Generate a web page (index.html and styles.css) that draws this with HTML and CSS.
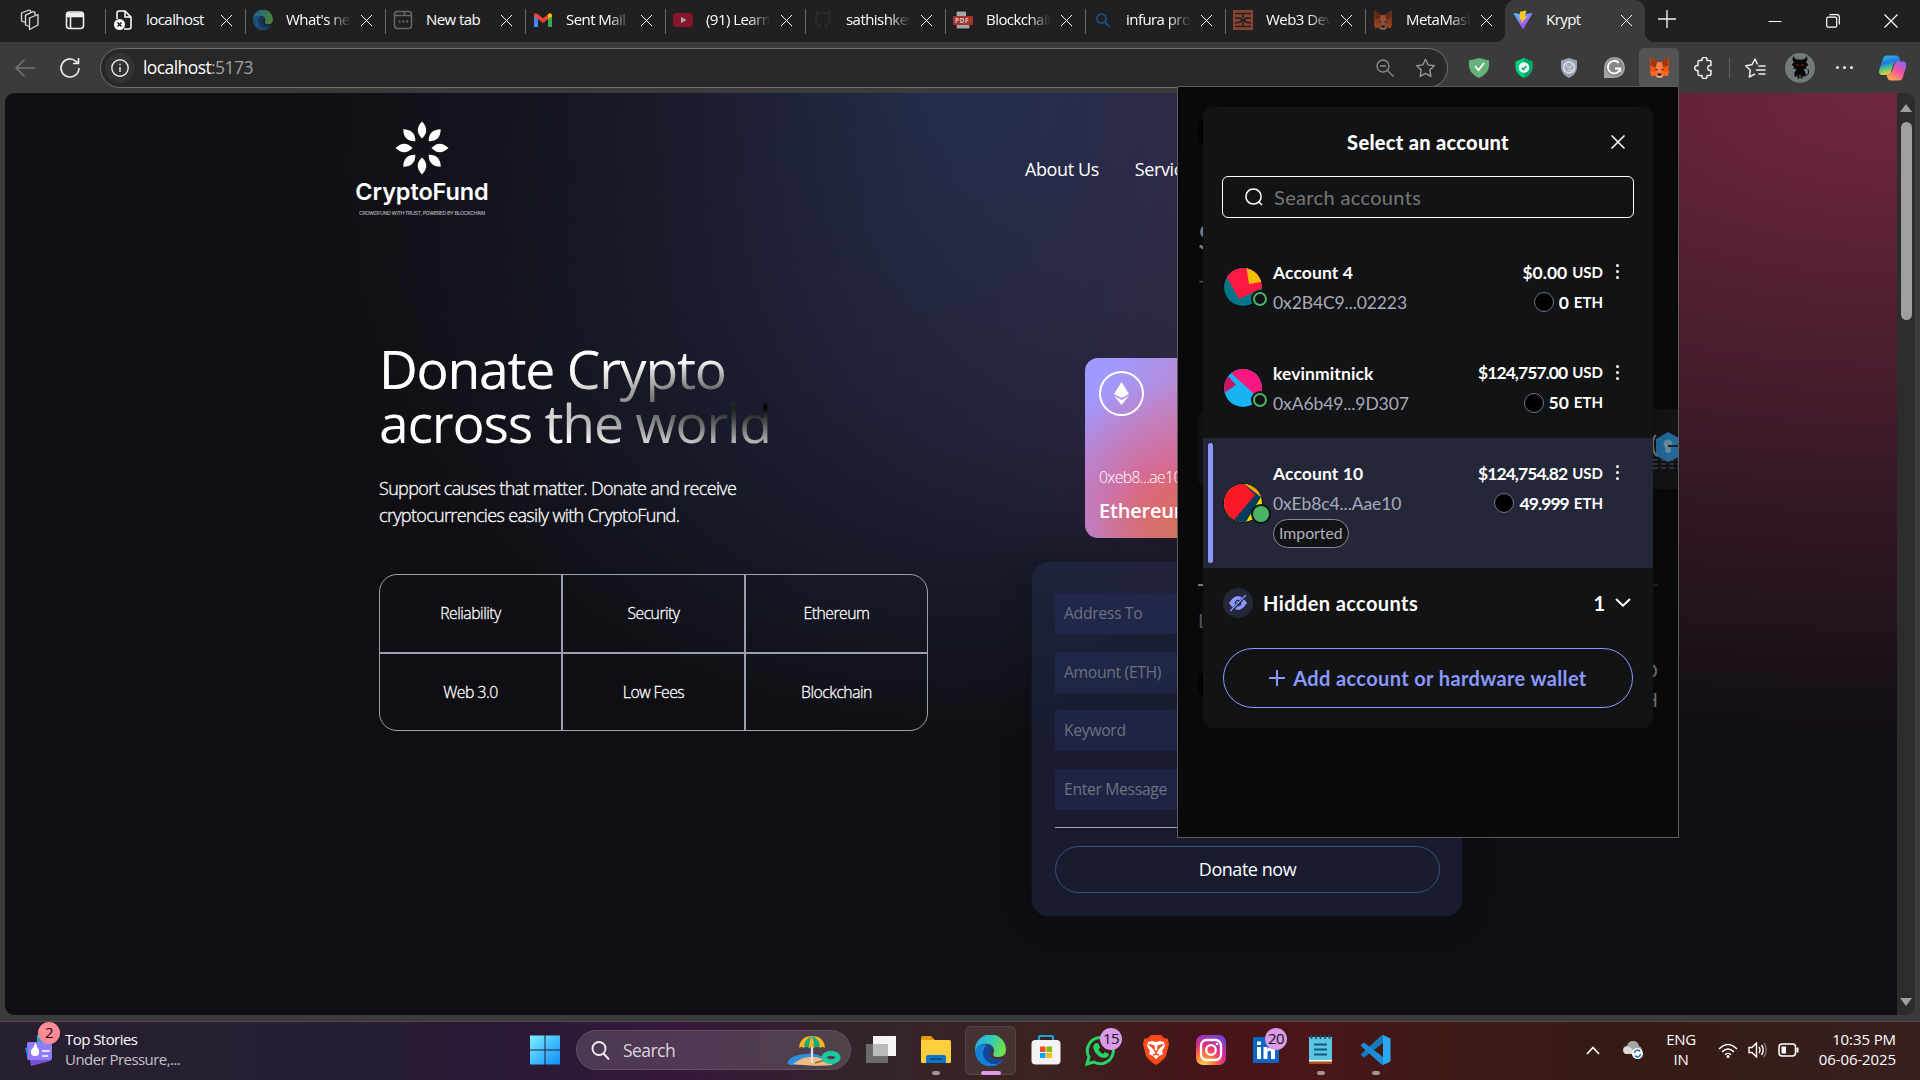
FILE: index.html
```html
<!DOCTYPE html>
<html lang="en">
<head>
<meta charset="utf-8">
<title>Krypt</title>
<link rel="stylesheet" href="styles.css">
</head>
<body>
<header class="tabstrip">
  <div class="strip-tools">
    <svg width="22" height="22" viewBox="0 0 22 22" fill="none" stroke="#ddd" stroke-width="1.3" stroke-linejoin="round"><path d="M10.500 9l8.500-3.500v10.500l-8.500 4.500z"/><path d="M10.500 17.500L6.500 16V6.200L14.500 2.500l1.500 1v2.500M6.500 13.500L2.500 12V4l7.500-3 1.500.8v1.500"/></svg>
    <svg width="20" height="20" viewBox="0 0 20 20" fill="none" stroke="#eee" stroke-width="1.6"><rect x="1.500" y="2" width="17" height="16.500" rx="3"/><path d="M2 3.500h16v3H2zM5.500 7v11" fill="#eee"/></svg>
  </div>
  <nav class="tabs">
    <div class="tab"><svg class="fav" viewBox="0 0 20 20"><path d="M4 9V3q0-2 2-2h6l6 6v10q0 2-2 2h-5M12 1v6h6" fill="none" stroke="#fff" stroke-width="1.500"/><circle cx="6.500" cy="14.500" r="5.500" fill="#fff"/><path d="M4.500 12.500l4 4m0-4l-4 4" stroke="#222" stroke-width="1.600"/></svg><span class="title">localhost</span><i class="x"></i></div>
    <div class="tab"><svg class="fav dim" viewBox="0 0 24 24"><use href="#edge"/></svg><span class="title">What's new</span><i class="x"></i></div>
    <div class="tab"><svg class="fav" viewBox="0 0 20 20" fill="none" stroke="#686868" stroke-width="1.500"><rect x="1.500" y="1.500" width="17" height="17" rx="3"/><path d="M2 5.500h8q1.500 0 1.500-1.500V2M11.500 5.500h7"/><path d="M5.500 11.500h2m1.800 0h2m1.800 0h2" stroke-width="2"/></svg><span class="title">New tab</span><i class="x"></i></div>
    <div class="tab"><svg class="fav" viewBox="0 0 20 20"><path d="M1 5v12h4V9z" fill="#4285f4"/><path d="M19 5v12h-4V9z" fill="#34a853"/><path d="M1 4.500Q1.500 2.500 4 3.500l6 4.700 6-4.700v5L10 13 4.500 8.800 1 6.500z" fill="#ea4335"/><path d="M15 9V4.300q3-2.500 4 .7v1.500z" fill="#fbbc04"/></svg><span class="title">Sent Mail</span><i class="x"></i></div>
    <div class="tab"><svg class="fav" viewBox="0 0 20 20"><rect y="3" width="20" height="14" rx="3.500" fill="#87152b"/><path d="M8 7l5.500 3L8 13z" fill="#aaa"/></svg><span class="title">(91) Learn</span><i class="x"></i></div>
    <div class="tab"><svg class="fav" viewBox="0 0 20 20"><path d="M7 18v-3q-4 0-4-3M7 15q-4-1-4-6 0-2 1-3V2l3 1h6l3-1v4q1 1 1 3 0 5-4 6v3" fill="none" stroke="#272c31" stroke-width="2"/></svg><span class="title">sathishkev</span><i class="x"></i></div>
    <div class="tab"><svg class="fav" viewBox="0 0 20 20"><path d="M3 1h10l4 5v13H3z" fill="#a7a4a4" stroke="#111"/><path d="M13 1v5h4z" fill="#222"/><rect y="6" width="20" height="9" rx="1" fill="#a6332e"/><text x="2" y="13" class="pdf">PDF</text></svg><span class="title">Blockchain</span><i class="x"></i></div>
    <div class="tab"><svg class="fav" viewBox="0 0 20 20" fill="none" stroke="#1b4b78" stroke-width="2"><circle cx="8.500" cy="8.500" r="4.500"/><path d="M12 12l4.500 5"/></svg><span class="title">infura proj</span><i class="x"></i></div>
    <div class="tab"><svg class="fav" viewBox="0 0 20 20"><path d="M0 0h20v20H0z" fill="#864332"/><path d="M2 3.500h16M2 16.500h16M10 3v5M10 17v-5M2 8h5l3 2.500L13 8h5M2 13l5-1 3-2 3 2 5 1" fill="none" stroke="#25201e" stroke-width="1.700"/></svg><span class="title">Web3 Dev</span><i class="x"></i></div>
    <div class="tab"><svg class="fav dim" viewBox="0 0 24 24"><use href="#fox"/></svg><span class="title">MetaMask</span><i class="x"></i></div>
    <div class="tab active"><svg class="fav" viewBox="0 0 20 20"><defs><linearGradient id="vt" x1="0" x2=".6" y2="1"><stop stop-color="#41d1ff"/><stop offset="1" stop-color="#bd34fe"/></linearGradient></defs><path d="M.3 3l9.700 16.500L19.700 3 10 4.500z" fill="url(#vt)"/><path d="M13.500.5L7 1.800 6.500 10l2.500-.5L8 14l6.500-8-3 .5z" fill="#ffc922"/></svg><span class="title">Krypt</span><i class="x"></i></div>
  </nav>
  <svg class="plus" width="18" height="18" viewBox="0 0 18 18" stroke="#eee" stroke-width="1.400"><path d="M9 0v18M0 9h18"/></svg>
  <div class="winctl">
    <svg width="14" height="14" viewBox="0 0 14 14" stroke="#fff"><path d="M.5 7.500h13"/></svg>
    <svg width="14" height="14" viewBox="0 0 14 14" fill="none" stroke="#fff" stroke-width="1.200"><rect x=".7" y="3.200" width="10" height="10" rx="1.500"/><path d="M3.500.7h7.300q2.500 0 2.500 2.500v7.300"/></svg>
    <svg width="14" height="14" viewBox="0 0 14 14" stroke="#fff" stroke-width="1.200"><path d="M.5.5l13 13m0-13l-13 13"/></svg>
  </div>
</header>

<div class="toolbar">
  <svg class="back" width="20" height="18" viewBox="0 0 20 18" fill="none" stroke="#777" stroke-width="1.500"><path d="M20 9H1M9.500.8L1 9l8.500 8.200"/></svg>
  <svg class="reload" width="22" height="22" viewBox="0 0 22 22" fill="none" stroke="#eee" stroke-width="1.600"><path d="M20 11a9 9 0 1 1-3-6.700l2 2M19.500 1v5.500H14"/></svg>
  <div class="address">
    <span class="site"><svg width="18" height="18" viewBox="0 0 18 18" fill="none" stroke="#eee" stroke-width="1.400"><circle cx="9" cy="9" r="8.200"/><path d="M9 8v5M9 4.800v1.500"/></svg></span>
    <span class="url">localhost<em>:5173</em></span>
    <svg class="zoomout" width="18" height="18" viewBox="0 0 18 18" fill="none" stroke="#8a8a8a" stroke-width="1.400"><circle cx="7" cy="7" r="6"/><path d="M11.500 11.500l6 6M4 7h6"/></svg>
    <svg width="21" height="20" viewBox="0 0 24 24" fill="none" stroke="#999" stroke-width="1.600" stroke-linejoin="round"><path d="M12 1.500l3.200 6.800 7.300 1-5.300 5.200 1.300 7.500L12 18.400 5.500 22l1.300-7.500L1.500 9.300l7.300-1z"/></svg>
  </div>
  <div class="exts">
    <span class="ext"><svg width="20" height="20" viewBox="0 0 20 20"><path d="M10 0l10 2.500v6Q19 16 10 20 1 16 0 8.500v-6z" fill="#67b279"/><path d="M6 8l3.500 4L15 5" fill="none" stroke="#fff" stroke-width="1.800"/></svg></span>
    <span class="ext"><svg width="20" height="20" viewBox="0 0 20 20"><path d="M10 0l8.500 3.500V10q-1 7-8.500 10-7.500-3-8.500-10V3.500z" fill="#00d17d"/><path d="M10 0l8.500 3.500V10q-1 7-8.500 10z" fill="#00a863"/><circle cx="10" cy="9.500" r="5.300" fill="#e9fff6"/><path d="M8 9.500l1.500 2 3-3.500" fill="none" stroke="#189c6d" stroke-width="1.500"/></svg></span>
    <span class="ext"><svg width="20" height="20" viewBox="0 0 20 20"><path d="M10 0l8 2.500V10q-1 7-8 10-7-3-8-10V2.500z" fill="#98a2b8"/><circle cx="10" cy="9.500" r="5.500" fill="#a9adb9" stroke="#dce0ea" stroke-width="1.500"/><path d="M7 7l3 3 4-4M9 12h4" stroke="#d5d9e3" fill="none"/></svg></span>
    <span class="ext"><svg width="21" height="21" viewBox="0 0 20 20"><path d="M0 20V10A10 10 0 1 1 10 20z" fill="#a5a5a5"/><circle cx="10" cy="10" r="8.500" fill="#888"/><path d="M14 5.500A6 6 0 1 0 15.500 11H10.500M15.500 11v3" fill="none" stroke="#fff" stroke-width="1.800"/></svg></span>
    <span class="ext on"><svg width="21" height="21" viewBox="0 0 24 24"><g id="fox"><path d="M2 .5L9.500 6h5L22 .5l1 8.500-1.500 5 1.300 3.500-1.500 4.500-4.300-1-2.500 2.500h-5L7 21l-4.300 1-1.500-4.500L2.500 14 1 9z" fill="#ff6a24"/><path d="M2 .5L9.500 6 8 12l-6.500-2zM22 .5L14.500 6l1.500 6 6.500-2z" fill="#a8350f"/><path d="M9.500 6h5l2 8-4.500 6-4.500-6z" fill="#ff8142"/><path d="M1.500 10.500L8 12l-1 5-5.500.5zm21 0L16 12l1 5 5.500.5z" fill="#f2560f"/><path d="M7.500 13l3.300 1.800-3.300.6zm9 0l-3.300 1.800 3.300.6z" fill="#241a3a"/><path d="M9.800 19.300l.8-.8h2.800l.8.800-.4 2h-3.600z" fill="#2d1b3d"/><path d="M7.500 20.500l2.300 1.200h4.400l2.300-1.200-2 3h-5z" fill="#e0c3b2"/></g></svg></span>
    <span class="ext"><svg width="21" height="22" viewBox="0 0 21 22" fill="none" stroke="#eee" stroke-width="1.500" stroke-linejoin="round"><path d="M4 5q0-1.500 1.500-1.500H8a2.600 2.600 0 1 1 5 0h2.500Q17 3.500 17 5v3.500a2.600 2.600 0 1 0 0 5V17q0 1.500-1.500 1.500H13a2.600 2.600 0 1 1-5 0H5.500Q4 18.500 4 17v-3.500a2.600 2.600 0 1 1 0-5z"/></svg></span>
  </div>
  <i class="vsep"></i>
  <svg class="favs" width="21" height="20" viewBox="0 0 21 20" fill="none" stroke="#eee" stroke-width="1.500" stroke-linejoin="round"><path d="M12.500 6.500L10 1 7 6.700l-6.300 1 4.600 4.600-1 6.700L10 15.800M13.500 8h7M11 12h9.500M13.500 16h7"/></svg>
  <svg class="avatar" width="30" height="30" viewBox="0 0 30 30"><circle cx="15" cy="15" r="15" fill="#71797b"/><path d="M9 3q0 3 3 3.500h6q3-.5 3-3.500 3 3 0 6l2.500 3-2.500 1.500.5 2-3 1 2 3v4h-2.500l-.5-2v4h-2v-4h-1v4h-2v-4l-1 2h-2v-4l2-3-3-1 .5-2L6.500 12 9 9q-3-3 0-6z" fill="#080808"/><path d="M20 22q5 1 3-6" stroke="#111" fill="none"/><path d="M11.500 11.500l2 1m5-1l-2 1" stroke="#d21"/></svg>
  <span class="more"><i></i><i></i><i></i></span>
  <svg class="copilot" width="28" height="26" viewBox="0 0 28 26"><defs><linearGradient id="c1" x2=".3" y2="1"><stop stop-color="#2fc8ee"/><stop offset=".45" stop-color="#2377df"/><stop offset=".65" stop-color="#3bbf9a"/><stop offset="1" stop-color="#f2d324"/></linearGradient><linearGradient id="c2" x1=".8" x2=".2" y2="1"><stop stop-color="#9c5cf0"/><stop offset=".5" stop-color="#f2569c"/><stop offset="1" stop-color="#ffb04a"/></linearGradient></defs><path d="M8 .5h9q3 0 4 4l.5 2.500h-4q-2.500 0-3.500 3l-2 7q-.7 3-3.500 3H3Q-1 20 .5 14L4 3.500Q5 .5 8 .5z" fill="url(#c1)"/><path d="M20 25.500h-8q-3 0-4-4l-.5-2.500h2q2.500 0 3.500-3l2.500-7q1-2.500 3.500-2.500h5q4 0 3 5.500L24 22q-1 3.500-4 3.500z" fill="url(#c2)"/></svg>
</div>

<div class="frame">
  <main class="page">
    <div class="nav">
      <div class="logo">
        <svg width="54" height="54" viewBox="-27 -27 54 54" fill="#fff"><g id="pp"><path id="pt" d="M0-26.500Q8.500-17.500 0-9.500-8.500-17.500 0-26.500z"/><use href="#pt" transform="rotate(90)"/></g><use href="#pp" transform="rotate(180)"/><use href="#pp" transform="rotate(45)"/><use href="#pp" transform="rotate(225)"/></svg>
        <b>CryptoFund</b>
        <small>CROWDFUND WITH TRUST, POWERED BY BLOCKCHAIN</small>
      </div>
      <div class="links"><a>About Us</a><a>Services</a></div>
    </div>
    <div class="hero">
      <section class="intro">
        <h1>Donate Crypto<br>across the world</h1>
        <p>Support causes that matter. Donate and receive<br>cryptocurrencies easily with CryptoFund.</p>
        <div class="features">
          <div>Reliability</div><div>Security</div><div>Ethereum</div>
          <div>Web 3.0</div><div>Low Fees</div><div>Blockchain</div>
        </div>
      </section>
      <section class="give">
        <div class="ethcard">
          <span class="ethring"><svg width="15" height="23" viewBox="0 0 15 23" fill="#fff"><path d="M7.500 0L15 12l-7.500 4L0 12zM0 13.700l7.500 4.200 7.500-4.200L7.500 23z"/></svg></span>
          <div><span class="addr">0xeb8...ae10</span><b>Ethereum</b></div>
        </div>
        <form class="form">
          <div class="field">Address To</div><div class="field">Amount (ETH)</div><div class="field">Keyword</div><div class="field">Enter Message</div>
          <hr>
          <div class="donate">Donate now</div>
        </form>
      </section>
    </div>
  </main>
  <aside class="scroll"><i class="up"></i><span class="thumb"></span><i class="down"></i></aside>
</div>

<div class="popup">
  <div class="behind">
    <i class="dot d1"></i><span class="ghost g1">S</span><span class="ghost g2">-</span>
    <i class="strip"></i>
    <svg class="hex" width="25" height="44" viewBox="0 0 25 44"><path d="M15 3l13 7v17l-13 6-12-6V10z" fill="#246e9f"/><path d="M3 6q-3 2-3 10t4 11" stroke="#777" fill="none" stroke-width="2"/><circle cx="15" cy="15" r="4.500" fill="#6d91a8"/><circle cx="15" cy="21" r="3" fill="#6d91a8"/><path d="M15 17h10" stroke="#16262f" stroke-width="2"/><path d="M0 31h25M0 35h25M0 39h25" stroke="#56526c" stroke-dasharray="5 3"/></svg>
    <i class="rule"></i><span class="ghost g3">L</span><i class="dot d2"></i><span class="ghost g4">D</span><span class="ghost g5">H</span>
  </div>
  <div class="modal">
    <div class="mhead"><h2>Select an account</h2><svg width="14" height="14" viewBox="0 0 14 14" stroke="#fff" stroke-width="1.500"><path d="M.5.5l13 13m0-13l-13 13"/></svg></div>
    <div class="search"><svg width="18" height="18" viewBox="0 0 18 18" fill="none" stroke="#fff" stroke-width="1.500"><circle cx="8.500" cy="8.500" r="7.600"/><path d="M14 14l3 3"/></svg><span>Search accounts</span></div>
    <div class="acct">
      <span class="pic"><svg width="40" height="40" viewBox="-20 -20 40 40"><circle r="19.500" fill="#000"/><clipPath id="cc"><circle r="19"/></clipPath><g clip-path="url(#cc)"><path d="M-20-20h40v40h-40z" fill="#007688"/><path d="M-22-20h50V-3L-4 12z" fill="#fc1943"/><path d="M3-22l3 19 18-3v-16z" fill="#f3be00"/></g></svg><i></i></span>
      <div class="who"><b>Account 4</b><span>0x2B4C9...02223</span></div>
      <div class="bal"><span>$0.00 <small>USD</small></span><span><i></i>0 <small>ETH</small></span></div>
      <span class="kebab"><i></i><i></i><i></i></span>
    </div>
    <div class="acct">
      <span class="pic"><svg width="40" height="40" viewBox="-20 -20 40 40"><circle r="19.500" fill="#000"/><g clip-path="url(#cc)"><path d="M-20-20h40v40h-40z" fill="#18b3f2"/><path d="M-12-20h34V16L11 6-12-15z" fill="#fc1780"/><path d="M-22-8l8-3 7 8-15 10z" fill="#c81466"/></g></svg><i></i></span>
      <div class="who"><b>kevinmitnick</b><span>0xA6b49...9D307</span></div>
      <div class="bal"><span class="tight">$124,757.00 <small>USD</small></span><span><i></i>50 <small>ETH</small></span></div>
      <span class="kebab"><i></i><i></i><i></i></span>
    </div>
    <div class="acct sel">
      <span class="pic"><svg width="40" height="40" viewBox="-20 -20 40 40"><circle r="19.500" fill="#000"/><g clip-path="url(#cc)"><path d="M-20-20h40v40h-40z" fill="#f5dc00"/><path d="M-4-22h26V-4L15-8z" fill="#faa600"/><path d="M-10-20H0L18-6 1 22h-14z" fill="#053c5e"/><path d="M-22-22h20L12-8-9 17-22 20z" fill="#fb1827"/></g></svg><i></i></span>
      <div class="who"><b>Account 10</b><span>0xEb8c4...Aae10</span><em>Imported</em></div>
      <div class="bal"><span class="tight">$124,754.82 <small>USD</small></span><span class="tight"><i></i>49.999 <small>ETH</small></span></div>
      <span class="kebab"><i></i><i></i><i></i></span>
    </div>
    <div class="hidden">
      <span class="eye"><svg width="18" height="18" viewBox="0 0 18 18"><path d="M0 9q9-14 18 0-9 14-18 0z" fill="#8b99ff"/><circle cx="9" cy="9" r="2.700" fill="none" stroke="#242738" stroke-width="1.200"/><path d="M1.500 17.500l15.500-16" stroke="#242738" stroke-width="3"/><path d="M1.200 17L17 1" stroke="#8b99ff" stroke-width="1.200"/></svg></span>
      <span class="hl">Hidden accounts</span><span>1</span>
      <svg width="16" height="9" viewBox="0 0 16 9" fill="none" stroke="#fff" stroke-width="2"><path d="M1 1l7 6.700L15 1"/></svg>
    </div>
    <div class="add"><svg width="16" height="16" viewBox="0 0 16 16" stroke="#8b99ff" stroke-width="2"><path d="M8 0v16M0 8h16"/></svg><span>Add account or hardware wallet</span></div>
  </div>
</div>

<footer class="taskbar">
  <div class="widgets">
    <div class="news"><svg width="28" height="32" viewBox="0 0 28 32"><path d="M12 0h12v10H12z" fill="#17a5c9"/><path d="M2 8h22q2 0 2 2l1 13q0 2-2 3L6 31z" fill="#7b4fd6"/><rect x="2" y="7" width="25" height="18" rx="2" fill="#8d7dfa"/><path d="M0 13l3-1v12z" fill="#2f8dd8"/><path d="M10 8q-1 5-4 7-1 6 4 6t4-5q0-2-2-4 0-3-2-4z" fill="#fff"/><path d="M17 16h8M17 21h6" stroke="#e8dcff" stroke-width="2"/></svg><i class="badge pink">2</i></div>
    <div class="headline"><span>Top Stories</span><span>Under Pressure,...</span></div>
  </div>
  <div class="apps">
    <svg width="30" height="30" viewBox="0 0 30 30"><defs><linearGradient id="wn" x2="1" y2="1"><stop stop-color="#7cf0ff"/><stop offset="1" stop-color="#0b8dfb"/></linearGradient></defs><path d="M0 .5h14.500v14H0zM15.500.5H30v14H15.500zM0 15.500h14.500v14H0zM15.500 15.500H30v14H15.500z" fill="url(#wn)"/></svg>
    <div class="tsearch"><svg width="19" height="19" viewBox="0 0 19 19" fill="none" stroke="#eee" stroke-width="1.900"><circle cx="8" cy="7.500" r="6.500"/><path d="M12.500 12.500l5.500 6"/></svg><span>Search</span>
      <svg class="beach" width="56" height="32" viewBox="0 0 56 32"><path d="M0 29Q3 21 18 20q16-3 26 11H3z" fill="#2c8fe0"/><path d="M6 30q19-15 40 1-16 2-40-1z" fill="#f2bd7c"/><path d="M25 2v27" stroke="#e7ddf0" stroke-width="2.200"/><path d="M12 14Q13 2 25 2t13 12q-3-2-5 0-3-3-6 0-2-2-5 0-3-3-5 0-3-2-5 0z" fill="#f6b51e"/><path d="M17 14q0-9 8-12-3 5-3 12-3-3-5 0zM27 14q0-7-2-12 8 3 8 12-3-3-6 0z" fill="#11a883"/><path d="M28 29l10-3" stroke="#96613c" stroke-width="1.500"/><ellipse cx="44" cy="23.500" rx="7" ry="4.200" fill="none" stroke="#20c7a3" stroke-width="5"/></svg></div>
    <div class="app"><svg width="30" height="30" viewBox="0 0 30 30"><path d="M0 9h22v19H0z" fill="#777" opacity=".85"/><path d="M7 1h23v20H7z" fill="#f4f4f4"/><path d="M7 9h15v12H7z" fill="#bbb"/></svg></div>
    <div class="app run"><svg width="30" height="28" viewBox="0 0 30 28"><path d="M0 2q0-2 2-2h8l4 4h14v8H0z" fill="#e09c0b"/><rect y="4" width="30" height="23" rx="1.500" fill="#ffce3e"/><path d="M5 27v-6q0-2 2-2h16q2 0 2 2v6z" fill="#1272c8"/><path d="M9 23h12" stroke="#08477f" stroke-width="1.500"/></svg></div>
    <div class="app current"><svg width="31" height="31" viewBox="0 0 24 24"><defs><linearGradient id="eg" x2="1" y2=".2"><stop stop-color="#2ca7e6"/><stop offset=".5" stop-color="#2fc4c5"/><stop offset="1" stop-color="#6de24c"/></linearGradient></defs><g id="edge"><path d="M0 12A12 12 0 0 1 24 11q0 6-6 6-3.500 0-4-2 2-5-2-7.500Q4 5 0 12z" fill="url(#eg)"/><path d="M0 12Q3 6.500 9 7.200 4 14 10 19q5 4 12 0A12 12 0 0 1 0 12z" fill="#1580d8"/><path d="M9 7.500Q12 7 13.500 10 9 15 14 18q4 2 8 .5Q17 25 10 21 3 15 9 7.500z" fill="#11489a"/></g></svg></div>
    <div class="app"><svg width="30" height="30" viewBox="0 0 30 30"><path d="M8 8V2.500Q8 1 9.500 1h11Q22 1 22 2.500V8" fill="none" stroke="#1aa2e2" stroke-width="2.200"/><rect x=".5" y="5" width="29" height="24.500" rx="4" fill="#f3f3f3"/><path d="M9 11.500h5.500v5.500H9z" fill="#f25022"/><path d="M15.500 11.500H21v5.500h-5.500z" fill="#7fba00"/><path d="M9 18h5.500v5H9z" fill="#00a4ef"/><path d="M15.500 18H21v5h-5.500z" fill="#ffb900"/></svg></div>
    <div class="app"><svg width="31" height="31" viewBox="0 0 31 31"><path d="M2 29l2-7A13 13 0 1 1 9 27z" fill="none" stroke="#25d366" stroke-width="3"/><path d="M11 8q-4 2-2 7 3 7 10 8 4 0 5-4l-4-2-2 2q-3-1-4.500-4.500L15 12.500 13.500 8.500z" fill="#25d366"/></svg><i class="badge">15</i></div>
    <div class="app"><svg width="26" height="30" viewBox="0 0 26 30"><path d="M8 0h10l3 3 4 1 1 5-3 12q-2 4-10 9Q5 25 3 21L0 9l1-5 4-1z" fill="#fb4a1c"/><path d="M5 7l4-1 4 1 4-1 4 1 1 4-3 5 1 3-4 2-3 3-3-3-4-2 1-3-3-5z" fill="#fff"/><path d="M7 10l4 1v3zM19 10l-4 1v3zM11 14l2 4 2-4M10 20l3-1 3 1" stroke="#fb4a1c" fill="none" stroke-width="1.400"/></svg></div>
    <div class="app"><svg width="30" height="30" viewBox="0 0 30 30"><defs><radialGradient id="ig" cx=".25" cy="1" r="1.150"><stop stop-color="#ffd45a"/><stop offset=".3" stop-color="#fd7a36"/><stop offset=".6" stop-color="#e02a86"/><stop offset="1" stop-color="#6a45dd"/></radialGradient></defs><rect width="30" height="30" rx="7" fill="url(#ig)"/><g fill="none" stroke="#fff" stroke-width="2.300"><rect x="5" y="5" width="20" height="20" rx="5.500"/><circle cx="15" cy="15" r="4.800"/></g><circle cx="21" cy="9" r="1.300" fill="#fff"/></svg></div>
    <div class="app"><svg width="26" height="26" viewBox="0 0 26 26"><rect width="26" height="26" rx="1" fill="#0a66c2"/><path d="M4 10h4v12H4zM4 4.500h4V8H4zM10.500 10h3.800v2q4-4.500 7.700 0v10h-4v-7q-1-3-3.500 0v7h-4z" fill="#fff"/></svg><i class="badge">20</i></div>
    <div class="app run"><svg width="23" height="30" viewBox="0 0 23 30"><path d="M0 26h23v3H0z" fill="#a2551b"/><path d="M0 2h23v24H0z" fill="#5ac7e2"/><path d="M0 25h23v1.500H0z" fill="#fff"/><path d="M2.500 0v4m4.500-4v4m4.500-4v4M16 0v4m4.500-4v4" stroke="#17516d" stroke-width="1.700"/><path d="M5 9.500h13M5 14.500h13M5 19.500h13" stroke="#14577a" stroke-width="2"/></svg></div>
    <div class="app run"><svg width="30" height="30" viewBox="0 0 30 30"><path d="M22 0l7.500 3.500v23L22 30z" fill="#2aa9f3"/><path d="M22 8L3 22.500l-3-2.500v-1L20.500.5 22 0z" fill="#1479bd"/><path d="M22 22L3 7.500 0 10v1l20.500 18.500L22 30z" fill="#1b8ed6"/></svg></div>
  </div>
  <div class="tray">
    <svg width="14" height="9" viewBox="0 0 14 9" fill="none" stroke="#fff" stroke-width="1.700"><path d="M1 8l6-6.500L13 8"/></svg>
    <svg class="cloud" width="20" height="18" viewBox="0 0 20 18"><path d="M4 13q-4 0-4-4t4-4q1-5 6-5t6 5q3 1 3 5l-2 3z" fill="#a9a5a5"/><path d="M3 13q-4-2-2-6 4-4 8 1l3 5z" fill="#ddd"/><circle cx="14.500" cy="12.500" r="5.500" fill="#fff"/><path d="M11.500 12a3 3 0 0 1 5.500-1.500M17.500 13a3 3 0 0 1-5.500 1.500" fill="none" stroke="#1b6fc2" stroke-width="1.500"/></svg>
    <div class="lang"><span>ENG</span><span>IN</span></div>
    <svg width="20" height="15" viewBox="0 0 20 15" fill="none" stroke="#fff" stroke-width="1.500"><path d="M1 6q9-9 18 0M4 9q6-6 12 0M7 11.700q3-2.800 6 0"/><circle cx="10" cy="13.500" r=".8" fill="#fff"/></svg>
    <svg width="19" height="16" viewBox="0 0 19 16" fill="none" stroke="#fff" stroke-width="1.400"><path d="M1 5.500h3L8.500 1v14L4 10.500H1zM11 5q2 3 0 6M13.500 3q3.500 5 0 10"/><path d="M16 1q4.500 7 0 14" stroke="#876e6e"/></svg>
    <svg width="21" height="14" viewBox="0 0 21 14" fill="none" stroke="#fff" stroke-width="1.500"><rect x="1" y="1" width="16.500" height="12" rx="3"/><path d="M19.500 4.500v5" stroke-width="2"/><rect x="3.500" y="3.500" width="4.500" height="7" fill="#fff" stroke="none"/></svg>
    <div class="clock"><span>10:35 PM</span><span>06-06-2025</span></div>
  </div>
</footer>
</body>
</html>
```

FILE: styles.css
```css
* { box-sizing: border-box; }
body {
  margin: 0; width: 1920px; height: 1080px; overflow: hidden; position: relative;
  display: flex; flex-direction: column; background: #3b3b3b; color: #fff;
  font-family: "Open Sans", "Noto Sans", sans-serif;
}
svg { display: block; flex: none; }
i, em { font-style: normal; }

/* tab strip */
.tabstrip { height: 42px; flex: none; display: flex; background: #202020; }
.strip-tools { width: 105px; display: flex; align-items: center; padding: 0 0 2px 19px; gap: 24px; }
.tabs { display: flex; }
.tab { width: 140px; height: 42px; display: flex; align-items: center; padding: 0 0 2px 8px; position: relative; }
.tab::before { content: ""; width: 1px; height: 25px; background: #6b6b6b; position: absolute; left: 0; top: 9px; }
.fav { width: 20px; height: 20px; }
.dim { opacity: .5; }
.pdf { font: 700 6.500px "Open Sans", sans-serif; fill: #ccc; letter-spacing: .6px; }
.title {
  width: 65px; margin-left: 13px; overflow: hidden; white-space: nowrap; font-size: 15px; line-height: 20px; padding-bottom: 2px; letter-spacing: -.55px;
  -webkit-mask-image: linear-gradient(90deg, #000 65%, transparent 100%);
}
.active .title, .tab:first-child .title, .tab:nth-child(3) .title { -webkit-mask-image: none; }
.x { width: 11px; height: 11px; margin-left: 10px; background: linear-gradient(45deg, transparent 46%, #fff 46% 54%, transparent 54%), linear-gradient(-45deg, transparent 46%, #fff 46% 54%, transparent 54%); }
.active { background: #3b3b3b; border-radius: 10px 10px 0 0; }
.active::before { display: none; }
.active::after {
  content: ""; position: absolute; left: -10px; right: -10px; bottom: 0; height: 10px;
  background: radial-gradient(circle at 0 0, transparent 10px, #3b3b3b 10.5px) left / 10px 10px no-repeat,
              radial-gradient(circle at 100% 0, transparent 10px, #3b3b3b 10.5px) right / 10px 10px no-repeat;
}
.plus { margin: 10px 0 0 13px; }
.winctl { margin-left: auto; display: flex; align-items: center; gap: 44px; padding-right: 22px; }

/* toolbar */
.toolbar { height: 51px; flex: none; display: flex; align-items: center; padding-left: 15px; }
.reload { margin-left: 24px; }
.address {
  margin-left: 19px; width: 1348px; height: 40px; border: 1px solid #6e6e6e; border-radius: 20px; background: #282828;
  display: flex; align-items: center; padding: 0 11px 0 4px;
}
.site { width: 30px; height: 30px; border-radius: 50%; background: #333; display: grid; place-items: center; }
.url { font-size: 17.5px; letter-spacing: -.58px; margin-left: 8px; padding-bottom: 2px; flex: 1; }
.url em { color: #a0a0a0; }
.zoomout { margin-right: 21px; }
.exts { display: flex; margin-left: 11px; height: 40px; gap: 5px; }
.ext { width: 40px; display: grid; place-items: center; border-radius: 5px; }
.on { background: #545454; }
.vsep { width: 1px; height: 20px; background: #616161; margin-left: 5px; }
.favs { margin-left: 15px; }
.avatar { margin-left: 19px; }
.more { display: flex; gap: 4px; margin-left: 21px; }
.more i { width: 3px; height: 3px; border-radius: 50%; background: #eee; }
.copilot { margin-left: 26px; }

/* page */
.frame { height: 928px; flex: none; display: flex; padding: 0 5px 6px; }
.page {
  width: 1892px; height: 922px; border-radius: 9px 0 0 9px; overflow: hidden; background-color: #0f0e13;
  background-image: radial-gradient(at 0% 0%, hsl(253,16%,7%) 0, transparent 50%),
    radial-gradient(at 50% 0%, hsl(225,39%,28%) 0, transparent 50%),
    radial-gradient(at 100% 0%, hsl(339,49%,30%) 0, transparent 50%);
}
.nav { height: 153px; display: flex; align-items: flex-start; }
.logo { width: 134px; margin: 28px 0 0 350px; display: flex; flex-direction: column; align-items: center; }
.logo b { font: 600 23.500px/29px Inter, sans-serif; letter-spacing: -.1px; margin-top: 2px; }
.logo small { font: 500 5.2px/8px Inter, sans-serif; color: #b5b5ba; white-space: nowrap; margin-top: 3px; letter-spacing: -.35px; }
.links { margin: 63px 0 0 536px; display: flex; gap: 36px; font-size: 18px; line-height: 26px; letter-spacing: -.4px; }
.hero { display: flex; }
.intro { width: 549px; margin: 91px 0 0 374px; display: flex; flex-direction: column; align-items: flex-start; }
h1 {
  margin: 0; padding: 4.5px 0; font-weight: 400; font-size: 53.500px; line-height: 54px; letter-spacing: -1.25px; width: 389px; white-space: nowrap;
  background-color: #fff;
  background-image: radial-gradient(at 4% 36%, #fff 0, transparent 53%), radial-gradient(at 100% 60%, #000 0, transparent 50%);
  -webkit-background-clip: text; background-clip: text; color: transparent;
}
.intro p { margin: 21px 0 0; font-weight: 300; font-size: 18px; line-height: 27px; letter-spacing: -.66px; white-space: nowrap; -webkit-text-stroke: .3px #fff; }
.features { margin-top: 45px; width: 549px; height: 157px; display: grid; grid-template: 1fr 1fr / repeat(3, 1fr); border-radius: 18px; overflow: hidden; border: 1px solid #9ca3af; gap: 2px; background: linear-gradient(#9a9fb0, #9a9fb0) 0 50% / 100% 2px no-repeat, linear-gradient(#9a9fb0, #9a9fb0) 33.3% 0 / 2px 100% no-repeat, linear-gradient(#9a9fb0, #9a9fb0) 66.7% 0 / 2px 100% no-repeat; }
.features div { display: grid; place-items: center; font-size: 15.75px; font-weight: 300; letter-spacing: -.5px; -webkit-text-stroke: .3px #fff; }
.give { width: 432px; margin: 112px 0 0 103px; display: flex; flex-direction: column; align-items: center; }
.ethcard {
  width: 324px; height: 180px; border-radius: 13px; padding: 13px 14px; display: flex; flex-direction: column; justify-content: space-between; align-items: flex-start;
  background-color: #a099ff;
  background-image: radial-gradient(110px 80px at 36% 100%, hsl(11,58%,60%) 20%, transparent 100%),
    radial-gradient(170px 125px at 30% 82%, hsl(345,68%,63%) 15%, transparent 100%),
    radial-gradient(190px 150px at 62% 35%, hsl(340,55%,66%) 0, transparent 100%);
}
.ethring { width: 45px; height: 45px; border: 2px solid #fff; border-radius: 50%; display: grid; place-items: center; }
.ethcard div { display: flex; flex-direction: column; }
.addr { font-size: 15.75px; line-height: 22px; font-weight: 300; letter-spacing: -.6px; margin-top: -3px; }
.ethcard b { font-size: 20px; line-height: 28px; font-weight: 600; margin-top: 9px; letter-spacing: -.2px; }
.form {
  width: 432px; height: 356px; margin-top: 23px; border-radius: 18px; border: 1px solid rgba(0,0,0,.3);
  background: rgba(39,51,89,.4); box-shadow: 0 4px 30px rgba(0,0,0,.2); padding: 31px 22px 0 23px;
}
.field { height: 41px; margin-bottom: 17.5px; border-radius: 2px; background: rgba(39,51,99,.4); color: #6b7280; font-size: 15.75px; line-height: 40px; padding-left: 9px; letter-spacing: -.35px; }
.form hr { border: 0; height: 1px; background: #9ca3af; margin: 0 0 18px; }
.donate { height: 47px; border: 1px solid #3d4f7c; border-radius: 24px; display: grid; place-items: center; font-size: 18px; letter-spacing: -.45px; padding-bottom: 1px; }
.scroll { width: 18px; background: #2c2c2c; border-radius: 0 9px 9px 0; display: flex; flex-direction: column; align-items: center; padding: 11px 0 9px; }
.up, .down { border: 6px solid transparent; border-top: 0; border-bottom: 8px solid #9f9f9f; }
.down { border-bottom: 0; border-top: 8px solid #9f9f9f; margin-top: auto; }
.thumb { width: 11px; height: 198px; border-radius: 6px; background: #9f9f9f; margin-top: 10px; }

/* wallet popup */
.popup {
  position: absolute; left: 1177px; top: 86px; width: 502px; height: 752px; background: #0a0a0a; border: 1px solid #5c5c5c;
  overflow: hidden; font-family: Lato, "Open Sans", sans-serif; padding: 20px 25px;
}
.behind > * { position: absolute; }
.dot { width: 40px; height: 40px; border-radius: 50%; background: #000; left: 20px; }
.d1 { top: 25px; } .d2 { top: 578px; }
.ghost { color: #5d5d62; font-size: 20px; line-height: 24px; }
.g1 { left: 20px; top: 130px; font-size: 34px; line-height: 40px; color: #8a8a90; } .g2 { left: 20px; top: 180px; }
.g3 { left: 20px; top: 521px; } .g4 { right: 20px; top: 571px; color: #77777c; } .g5 { right: 20px; top: 600px; color: #77777c; }
.strip { left: 20px; right: 0; top: 322px; height: 80px; background: #131416; border-radius: 10px 0 0 10px; }
.hex { right: 0; top: 342px; }
.rule { left: 20px; right: 20px; top: 497px; height: 2px; background: linear-gradient(90deg, #888 50%, #222 50%); }
.modal { position: relative; width: 450px; height: 621px; border-radius: 10px; background: #121314; box-shadow: 0 0 40px rgba(0,0,0,.25); }
.mhead { height: 70px; display: grid; grid-template-columns: 75px 1fr 75px; align-items: center; }
.mhead h2 { grid-column: 2; margin: 0 0 1px; text-align: center; font-size: 20px; font-weight: 900; letter-spacing: .3px; white-space: nowrap; }
.mhead svg { margin: 0 0 0 33px; }
.search { height: 42px; margin: -1px 19px 0; border: 1px solid #fff; border-radius: 6px; display: flex; align-items: center; padding: 0 0 1px 22px; gap: 11px; font-size: 20px; color: #777; letter-spacing: .35px; }
.acct { height: 100.500px; display: flex; padding: 22px 0 0 20px; font-size: 17.500px; position: relative; }
.search + .acct { margin-top: 19px; }
.pic { position: relative; width: 40px; height: 40px; margin-top: 8px; flex: none; align-self: flex-start; }
.pic i { position: absolute; left: 30px; top: 25px; width: 14px; height: 14px; border-radius: 50%; border: 2px solid #4bb364; background: #121314; box-shadow: 0 0 0 2px #121314; }
.who { display: flex; flex-direction: column; align-items: flex-start; margin-left: 10px; }
.who b { line-height: 28px; letter-spacing: .1px; }
.who span { line-height: 32px; height: 31px; color: #a9a9bb; white-space: nowrap; letter-spacing: -.1px; }
.who em { font-size: 15.800px; line-height: 24px; height: 29px; padding: 1px 5px; border: 1px solid #858b9a; border-radius: 15px; color: #b0b0bc; background: #121314; }
.bal { margin: -2px 0 0 auto; display: flex; flex-direction: column; align-items: flex-end; font-weight: 700; }
.bal span { display: flex; align-items: center; gap: 5px; line-height: 27px; height: 30px; white-space: nowrap; }
.bal .tight { letter-spacing: -.95px; }
.bal .tight i { margin-right: 1px; }
.bal small { font-size: 15px; font-weight: 700; letter-spacing: 0; }
.bal i { width: 20px; height: 20px; border-radius: 50%; background: #000; border: 1px solid #70788a; }
.kebab { width: 29px; margin: 5px 21px 0 0; display: flex; flex-direction: column; align-items: center; gap: 3px; }
.kebab i { width: 3px; height: 3px; background: #fff; border-radius: 50%; }
.sel { height: 129.500px; background: #242738; }
.sel::before { content: ""; position: absolute; left: 5px; top: 5px; bottom: 5px; width: 5px; border-radius: 3px; background: #8b99ff; }
.sel .pic { margin-top: 23px; }
.sel .pic i { left: 30px; top: 23px; width: 16px; height: 16px; background: #4bb364; }
.hidden { height: 70px; display: flex; align-items: center; padding: 0 22px 0 20px; font-size: 20px; font-weight: 700; }
.eye { width: 30px; height: 30px; border-radius: 50%; background: #242738; display: grid; place-items: center; margin-right: 10px; }
.hl { flex: 1; letter-spacing: .4px; }
.hidden > svg { margin-left: 10px; }
.add { margin: 10px 20px 0; height: 60px; border: 1px solid #8b99ff; border-radius: 30px; display: flex; align-items: center; justify-content: center; gap: 8px; font-size: 20px; font-weight: 700; color: #8b99ff; letter-spacing: .37px; white-space: nowrap; }

/* taskbar */
.taskbar {
  height: 59px; flex: none; display: flex; align-items: center; border-top: 1px solid #55484f; padding-bottom: 2px;
  background: linear-gradient(90deg, #282030 0, #251e33 350px, #2a1936 520px, #35183a 680px, #33242a 860px, #3a2321 1040px, #461419 1200px, #4b1519 1300px, #3d1a15 1450px, #351a15 1650px, #38201f 1920px);
}
.widgets { display: flex; align-items: center; width: 530px; padding-left: 25px; }
.news { position: relative; width: 28px; margin-top: 2px; }
.badge { position: absolute; left: 27px; top: 2px; width: 22px; height: 22px; border-radius: 50%; background: #da9be8; color: #111; font-size: 15px; line-height: 20px; text-align: center; letter-spacing: -.5px; }
.pink { left: 13px; top: -13px; background: #ff8c94; }
.headline { display: flex; flex-direction: column; margin: -3px 0 0 12px; font-size: 15px; line-height: 20px; letter-spacing: -.55px; }
.headline span + span { color: #c5c2c8; }
.apps { display: flex; align-items: center; }
.tsearch { width: 275px; height: 40px; margin: 0 2px 0 16px; border-radius: 20px; border: 1px solid #66505f; background: rgba(255,255,255,.14); display: flex; align-items: center; padding: 0 7px 0 14px; gap: 13px; font-size: 17.500px; letter-spacing: -.55px; color: #dcd6dc; }
.tsearch span { padding-bottom: 1px; }
.beach { margin-left: auto; }
.app { width: 55px; height: 49px; display: grid; place-items: center; position: relative; }
.current::before { content: ""; position: absolute; inset: 0 2px; background: rgba(255,255,255,.07); border: 1px solid rgba(255,255,255,.09); border-radius: 6px; }
.current svg { position: relative; }
.run::after, .current::after { content: ""; position: absolute; left: 23.500px; bottom: 0; width: 8px; height: 4px; border-radius: 2px; background: #a09393; }
.current::after { left: 17.500px; width: 20px; background: #dd9be9; }
.tray { margin-left: auto; display: flex; align-items: center; padding-right: 24px; font-size: 15px; line-height: 20px; letter-spacing: -.35px; }
.cloud { margin-left: 23px; }
.lang { display: flex; flex-direction: column; align-items: center; margin: -3px 22px 0 23px; }
.tray .lang + svg + svg { margin: 0 11px 0 10px; }
.clock { display: flex; flex-direction: column; align-items: flex-end; margin: -3px 0 0 20px; letter-spacing: -.1px; }
```
